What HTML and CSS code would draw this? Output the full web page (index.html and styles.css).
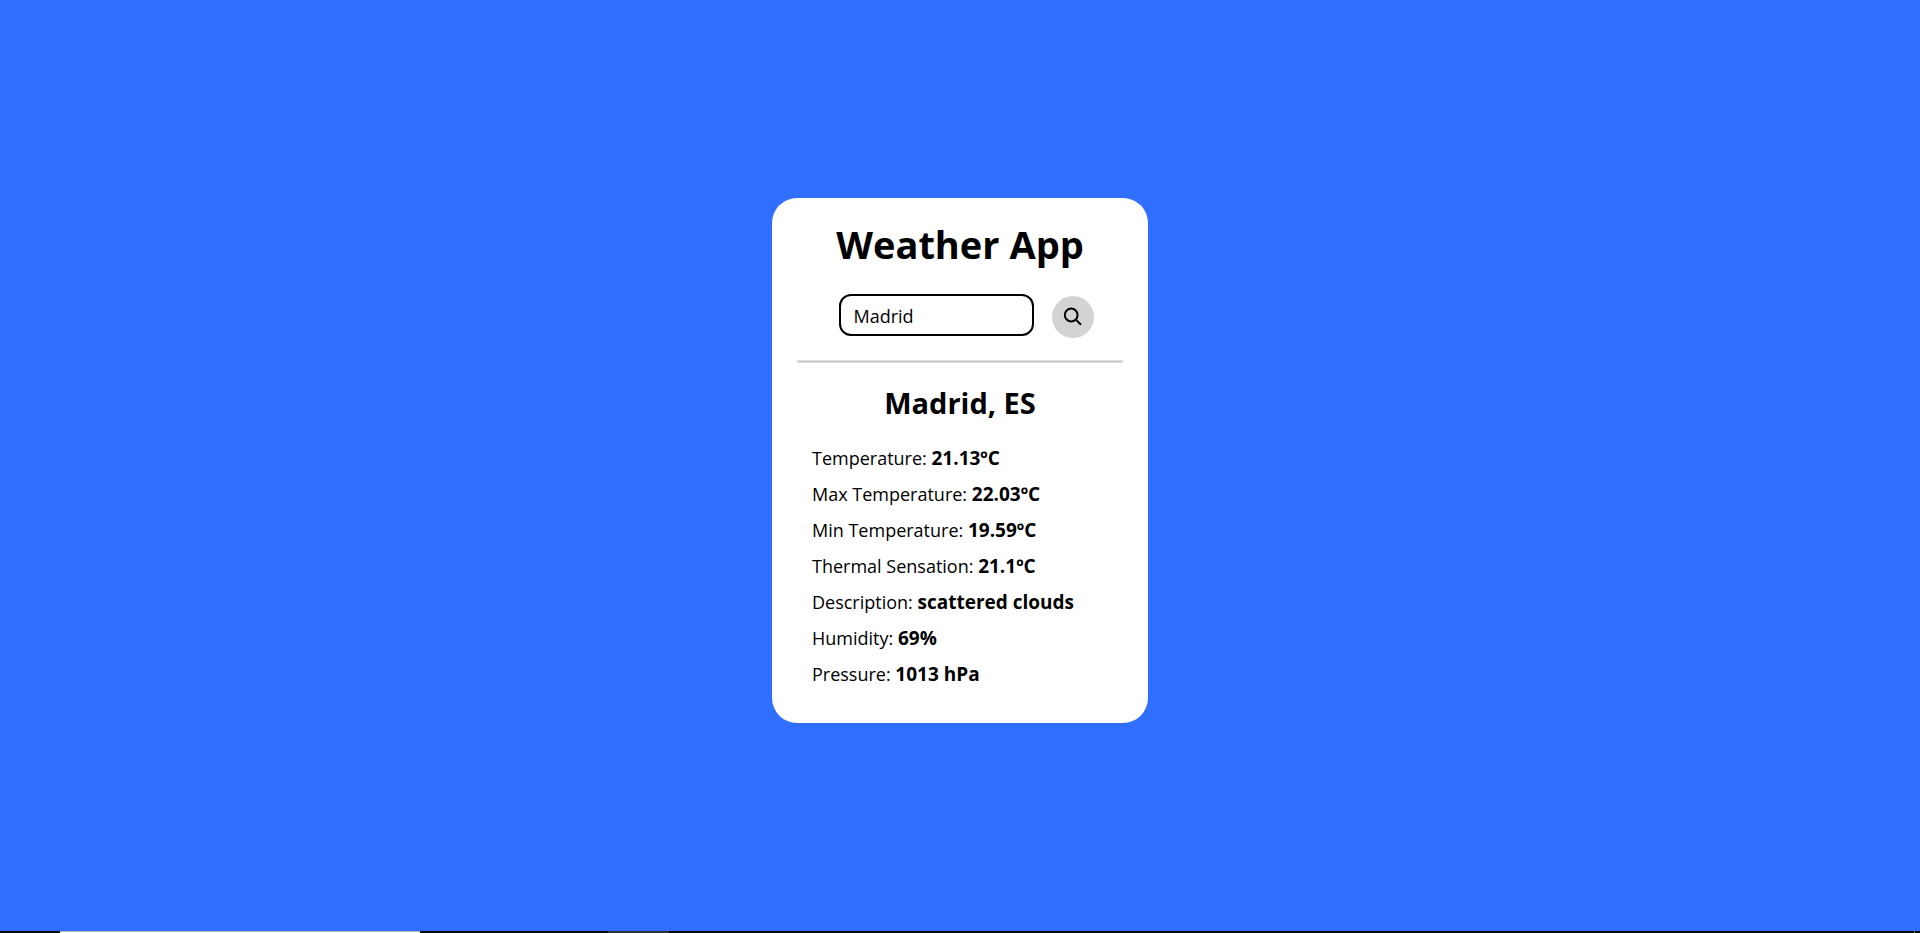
FILE: index.html
```html
<!DOCTYPE html>
<html lang="en">
<head>
<meta charset="utf-8">
<title>Weather App</title>
<link rel="stylesheet" href="styles.css">
</head>
<body class="page">
<main class="stage">
  <section class="card">
    <h1 class="title">Weather App</h1>
    <form class="search">
      <input class="search-input" type="text" value="Madrid" aria-label="City">
      <button class="search-button" type="button" aria-label="Search">
        <svg class="search-icon" viewBox="0 0 20 20" aria-hidden="true"><circle cx="8.2" cy="8" r="6.4"/><path d="M12.8 12.6 18 17.8"/></svg>
      </button>
    </form>
    <hr class="divider">
    <h2 class="city">Madrid, ES</h2>
    <ul class="details">
      <li>Temperature: <strong>21.13ºC</strong></li>
      <li>Max Temperature: <strong>22.03ºC</strong></li>
      <li>Min Temperature: <strong>19.59ºC</strong></li>
      <li>Thermal Sensation: <strong>21.1ºC</strong></li>
      <li>Description: <strong>scattered clouds</strong></li>
      <li>Humidity: <strong>69%</strong></li>
      <li>Pressure: <strong>1013 hPa</strong></li>
    </ul>
  </section>
</main>
<footer class="taskbar"><span class="window"></span><span class="tab"></span><span class="edge"></span></footer>
</body>
</html>
```
FILE: styles.css
```css
* { box-sizing: border-box; }
.page {
  margin: 0;
  min-height: 100vh;
  display: flex;
  flex-direction: column;
  background: #306eff;
  color: #000;
  font-family: "Segoe UI", "Open Sans", "Noto Sans", sans-serif;
}
.stage {
  flex: 1;
  display: flex;
  align-items: center;
  justify-content: center;
  padding-bottom: 10px;
}
.card {
  width: 376px;
  padding: 18px 25px 31px;
  border-radius: 25px;
  background: #fff;
}
.title {
  margin: 0;
  font-size: 38px;
  line-height: 56px;
  font-weight: 700;
  text-align: center;
}
.search {
  display: flex;
  align-items: flex-start;
  justify-content: center;
  gap: 18px;
  margin-top: 22px;
  padding-left: 12px;
}
.search-input {
  width: 195px;
  height: 42px;
  padding: 2px 13px 0;
  border: 2px solid #000;
  border-radius: 12px;
  background: #fff;
  color: #000;
  font: 400 18px "Segoe UI", "Open Sans", "Noto Sans", sans-serif;
}
.search-button {
  display: grid;
  place-items: center;
  width: 42px;
  height: 42px;
  margin-top: 2px;
  padding: 0;
  border: 0;
  border-radius: 50%;
  background: #d3d3d3;
}
.search-icon {
  width: 20px;
  height: 20px;
  fill: none;
  stroke: #000;
  stroke-width: 2;
}
.divider {
  height: 3px;
  margin: 22px 0 0;
  border: 1px solid #dedede;
  background: #c8c8c8;
}
.city {
  margin: 20px 0 0;
  font-size: 29px;
  line-height: 40px;
  font-weight: 700;
  text-align: center;
}
.details {
  margin: 17px 0 0;
  padding: 0 0 0 15px;
  list-style: none;
  font-size: 18px;
  line-height: 36px;
  font-weight: 400;
}
.details strong {
  font-size: 19px;
  line-height: 1;
  font-weight: 700;
}
.taskbar {
  display: flex;
  height: 2px;
  background: #08060a;
}
.window {
  width: 360px;
  margin-left: 60px;
  background: #f5f5f5;
  border-top: 1px solid #bbb;
}
.tab {
  width: 61px;
  margin-left: 188px;
  background: #333035;
}
.edge {
  width: 1px;
  margin-left: auto;
  margin-right: 5px;
  background: #777;
}
```
